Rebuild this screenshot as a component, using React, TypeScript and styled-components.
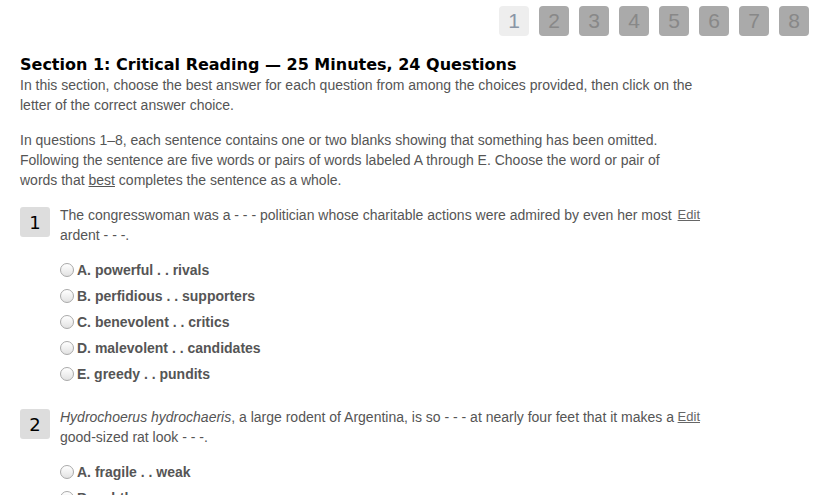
import React from "react";
import styled, { createGlobalStyle } from "styled-components";

const Global = createGlobalStyle`
  html, body { margin: 0; padding: 0; background: #fff; }
  body { font-family: "Liberation Sans", Arial, sans-serif; }
`;

const Page = styled.div`
  width: 817px;
  padding: 0 20px;
  box-sizing: border-box;
`;

const Pager = styled.nav`
  display: flex;
  justify-content: flex-end;
  gap: 10px;
  padding: 6px 8px 0 0;
  margin-right: -20px;
`;

const PageBox = styled.div<{ $active?: boolean }>`
  width: 30px;
  height: 30px;
  border-radius: 4px;
  background: ${(p) => (p.$active ? "#eeeeee" : "#aaaaaa")};
  color: ${(p) => (p.$active ? "#8a96a6" : "#888888")};
  font-family: "Liberation Sans", Arial, sans-serif;
  font-size: 21px;
  line-height: 30px;
  text-align: center;
`;

const Heading = styled.h1`
  margin: 18px 0 0;
  font-family: "DejaVu Sans", Verdana, sans-serif;
  font-weight: bold;
  font-size: 16px;
  line-height: 21px;
  color: #000;
`;

const Para = styled.p`
  max-width: 676px;
  margin: 0 0 15px;
  font-size: 14px;
  line-height: 20px;
  color: #555;
`;

const Question = styled.section`
  display: flex;
  gap: 10px;
  margin-top: 14px;
  width: 680px;
`;

const Num = styled.div`
  flex: 0 0 30px;
  height: 30px;
  margin-top: 2px;
  border-radius: 3px;
  background: #dddddd;
  color: #000;
  font-family: "DejaVu Sans", Verdana, sans-serif;
  font-size: 18px;
  line-height: 32px;
  text-align: center;
`;

const Body = styled.div`
  flex: 1;
`;

const Stem = styled.div`
  font-size: 14px;
  line-height: 20px;
  color: #555;
  hyphens: none;
`;

const Edit = styled.a`
  float: right;
  font-size: 13px;
  line-height: 20px;
  color: #666;
  text-decoration: underline;
`;

const Options = styled.ul`
  list-style: none;
  margin: 12px 0 6px;
  padding: 0;
`;

const Option = styled.li`
  display: flex;
  align-items: center;
  gap: 3px;
  height: 26px;
  font-size: 14px;
  font-weight: bold;
  color: #555;
`;

const Radio = styled.span`
  width: 12px;
  height: 12px;
  border-radius: 50%;
  border: 1px solid #a9a9a9;
  background: linear-gradient(#ffffff, #e2e2e2);
`;

const NoBreak = styled.span`
  white-space: nowrap;
`;

type Q = { n: number; stem: React.ReactNode; options: string[] };

const questions: Q[] = [
  {
    n: 1,
    stem: (
      <>
        The congresswoman was a - - - politician whose charitable actions were admired by even her most ardent - - -.
      </>
    ),
    options: [
      "A. powerful . . rivals",
      "B. perfidious . . supporters",
      "C. benevolent . . critics",
      "D. malevolent . . candidates",
      "E. greedy . . pundits",
    ],
  },
  {
    n: 2,
    stem: (
      <>
        <i>Hydrochoerus hydrochaeris</i>, a large rodent of Argentina, is so - - - at nearly four feet that it makes a{" "}
        <NoBreak>good-sized</NoBreak> rat look - - -.
      </>
    ),
    options: ["A. fragile . . weak", "B. subtle . . coarse"],
  },
];

export default function App() {
  return (
    <Page>
      <Global />
      <Pager>
        {[1, 2, 3, 4, 5, 6, 7, 8].map((n) => (
          <PageBox key={n} $active={n === 1}>
            {n}
          </PageBox>
        ))}
      </Pager>
      <Heading>Section 1: Critical Reading — 25 Minutes, 24 Questions</Heading>
      <Para>
        In this section, choose the best answer for each question from among the choices provided, then click on the
        letter of the correct answer choice.
      </Para>
      <Para>
        In questions 1–8, each sentence contains one or two blanks showing that something has been omitted. Following
        the sentence are five words or pairs of words labeled A through E. Choose the word or pair of words that{" "}
        <u>best</u> completes the sentence as a whole.
      </Para>
      {questions.map((q) => (
        <Question key={q.n}>
          <Num>{q.n}</Num>
          <Body>
            <Stem>
              <Edit href="#">Edit</Edit>
              {q.stem}
            </Stem>
            <Options>
              {q.options.map((o) => (
                <Option key={o}>
                  <Radio />
                  {o}
                </Option>
              ))}
            </Options>
          </Body>
        </Question>
      ))}
    </Page>
  );
}
